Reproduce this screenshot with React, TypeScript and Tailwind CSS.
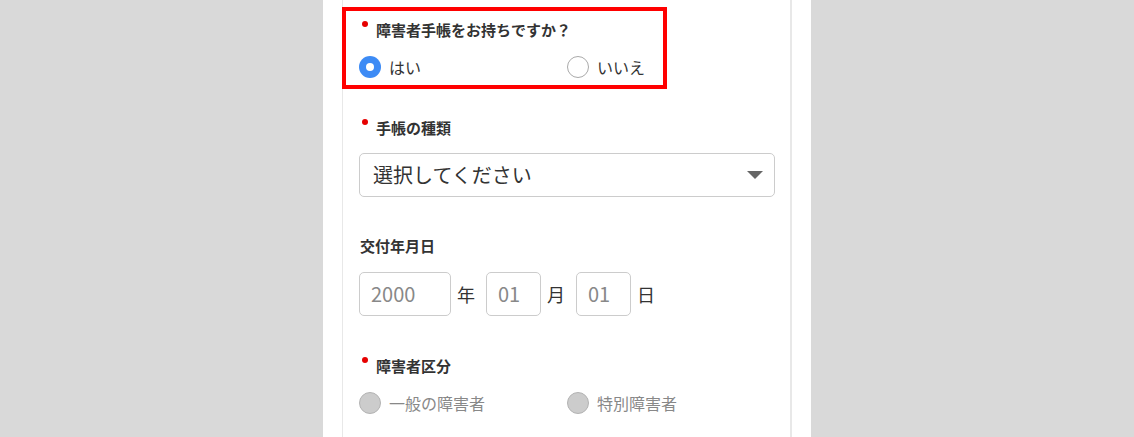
const font = { fontFamily: '"Noto Sans CJK JP", "Noto Sans", sans-serif' };

function Label({ text, required }: { text: string; required?: boolean }) {
  return (
    <div className="flex items-start h-5 text-[15px] leading-5 font-bold text-[#333]">
      {required ? (
        <span className="w-[6px] h-[6px] rounded-full bg-[#e60000] ml-[3px] mr-[8px] mt-[1px] shrink-0"></span>
      ) : (
        <span className="w-px shrink-0"></span>
      )}
      <span>{text}</span>
    </div>
  );
}

function Radio({ label, state }: { label: string; state: "checked" | "off" | "disabled" }) {
  return (
    <div className="flex items-center w-[208px] shrink-0 h-[22px]">
      {state === "checked" && (
        <span className="w-[22px] h-[22px] rounded-full bg-[#3d8bf5] flex items-center justify-center shrink-0">
          <span className="w-[8px] h-[8px] rounded-full bg-white"></span>
        </span>
      )}
      {state === "off" && (
        <span className="w-[22px] h-[22px] rounded-full bg-white border-[1.5px] border-[#aaa] shrink-0"></span>
      )}
      {state === "disabled" && (
        <span className="w-[22px] h-[22px] rounded-full bg-[#cccccc] border-[1.5px] border-[#b3b3b3] shrink-0"></span>
      )}
      <span
        className={`ml-[8px] text-[16px] leading-[22px] ${state === "disabled" ? "text-[#888]" : "text-[#333]"}`}
      >
        {label}
      </span>
    </div>
  );
}

function DateBox({ value, w }: { value: string; w: string }) {
  return (
    <div
      className={`${w} h-[44px] border border-[#cccccc] rounded-[5px] flex items-center pl-[11px] text-[20px] text-[#888] bg-white`}
    >
      {value}
    </div>
  );
}

export default function App() {
  return (
    <div className="w-full h-[437px] bg-[#d9d9d9] flex justify-center overflow-hidden" style={font}>
      <div className="w-[488px] h-full bg-white px-[19px]">
        <div className="h-full border-l border-r-2 border-[#e8e8e8] pt-[7px] pr-[15px]">
          {/* 障害者手帳 */}
          <div className="-ml-px w-[325px] h-[82px] border-[4px] border-[#ff0000] pl-[13px] pt-[9px]">
            <Label text="障害者手帳をお持ちですか？" required />
            <div className="flex mt-[16px]">
              <Radio label="はい" state="checked" />
              <div className="flex items-center h-[22px]">
                <span className="w-[22px] h-[22px] rounded-full bg-white border-[1.5px] border-[#aaa] shrink-0"></span>
                <span className="ml-[8px] text-[16px] leading-[22px] text-[#333]">いいえ</span>
              </div>
            </div>
          </div>

          <div className="pl-4">
            {/* 手帳の種類 */}
            <div className="mt-[29px]">
              <Label text="手帳の種類" required />
              <div className="mt-[15px] h-[44px] border border-[#cccccc] rounded-[5px] flex items-center justify-between pl-[13px] pr-[11px]">
                <span className="text-[20px] text-[#333]">選択してください</span>
                <svg width="16" height="8" viewBox="0 0 16 8">
                  <path d="M0 0 L16 0 L8 8 Z" fill="#666" />
                </svg>
              </div>
            </div>

            {/* 交付年月日 */}
            <div className="mt-[39px]">
              <Label text="交付年月日" />
              <div className="mt-[16px] flex items-center">
                <DateBox value="2000" w="w-[92px]" />
                <span className="ml-[6px] mr-[11px] text-[18px] text-[#333]">年</span>
                <DateBox value="01" w="w-[55px]" />
                <span className="ml-[6px] mr-[11px] text-[18px] text-[#333]">月</span>
                <DateBox value="01" w="w-[55px]" />
                <span className="ml-[6px] text-[18px] text-[#333]">日</span>
              </div>
            </div>

            {/* 障害者区分 */}
            <div className="mt-[40px]">
              <Label text="障害者区分" required />
              <div className="flex mt-[16px]">
                <Radio label="一般の障害者" state="disabled" />
                <Radio label="特別障害者" state="disabled" />
              </div>
            </div>
          </div>
        </div>
      </div>
    </div>
  );
}
